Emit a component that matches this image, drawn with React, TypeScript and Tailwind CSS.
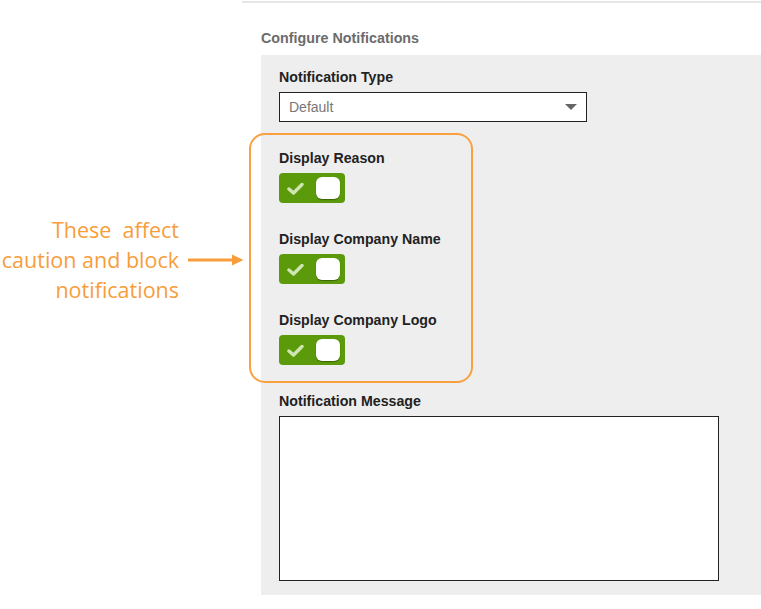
import React from 'react';

const Toggle = () => (
  <div className="mt-[7px] flex h-[30px] w-[66px] items-center rounded-[4px] bg-[#5b9a0a]">
    <svg className="ml-[8px]" width="17" height="13" viewBox="0 0 17 13">
      <path d="M2 7 L6.5 11 L15 2.5" fill="none" stroke="#cfe6b3" strokeWidth="3.4" strokeLinecap="round" strokeLinejoin="round" />
    </svg>
    <div className="ml-auto mr-[5px] h-[22px] w-[24px] rounded-[6px] bg-white shadow-[0_1px_1px_rgba(0,0,0,0.35)]" />
  </div>
);

const Label = ({ text, className = '' }: { text: string; className?: string }) => (
  <div className={`text-[14.2px] leading-[16px] font-bold text-[#222] ${className}`}>{text}</div>
);

export default function App() {
  const switches = ['Display Reason', 'Display Company Name', 'Display Company Logo'];

  return (
    <div className="flex h-[609px] w-[761px] overflow-hidden bg-white" style={{ fontFamily: '"Liberation Sans", Arial, sans-serif' }}>
      {/* callout */}
      <div className="w-[242px] shrink-0 pt-[215px]">
        <div className="flex items-center">
          <div
            className="w-[179px] shrink-0 whitespace-nowrap text-right text-[21.5px] leading-[30px] text-[#f89d3c]"
            style={{ fontFamily: '"Open Sans", sans-serif' }}
          >
            These&nbsp; affect
            <br />
            caution and block
            <br />
            notifications
          </div>
          <svg className="ml-[9px] shrink-0" width="56" height="12" viewBox="0 0 56 12">
            <line x1="0" y1="6" x2="46" y2="6" stroke="#f89d3c" strokeWidth="3" />
            <path d="M44 0.5 L55.5 6 L44 11.5 Z" fill="#f89d3c" />
          </svg>
        </div>
      </div>

      <div className="flex-1 mt-px border-t-2 border-[#e6e6e6] pl-[19px]">
        <div className="pt-[27px] text-[14.3px] leading-[16px] font-bold text-[#6b6b6b]">Configure Notifications</div>

        <div className="mt-[9px] bg-[#eeeeee] pl-[18px] pt-[14px] pb-[14px]">
          <Label text="Notification Type" />
          <div className="mt-[7px] flex h-[30px] w-[308px] items-center border border-[#222] bg-white pl-[9px] pr-[9px]">
            <span className="text-[14px] text-[#777]">Default</span>
            <svg className="ml-auto" width="12" height="6" viewBox="0 0 12 6">
              <path d="M0 0 H12 L6 6 Z" fill="#666" />
            </svg>
          </div>

          <div className="-ml-[30px] mt-[11px] w-[224px] rounded-[16px] border-2 border-[#f9a03f] pl-[28px] pt-[15px] pb-[16px]">
            {switches.map((s, i) => (
              <div key={s} className={i > 0 ? 'mt-[28px]' : ''}>
                <Label text={s} />
                <Toggle />
              </div>
            ))}
          </div>

          <Label text="Notification Message" className="mt-[10px]" />
          <div className="mt-[7px] h-[165px] w-[440px] border border-[#222] bg-white" />
        </div>
      </div>
    </div>
  );
}
